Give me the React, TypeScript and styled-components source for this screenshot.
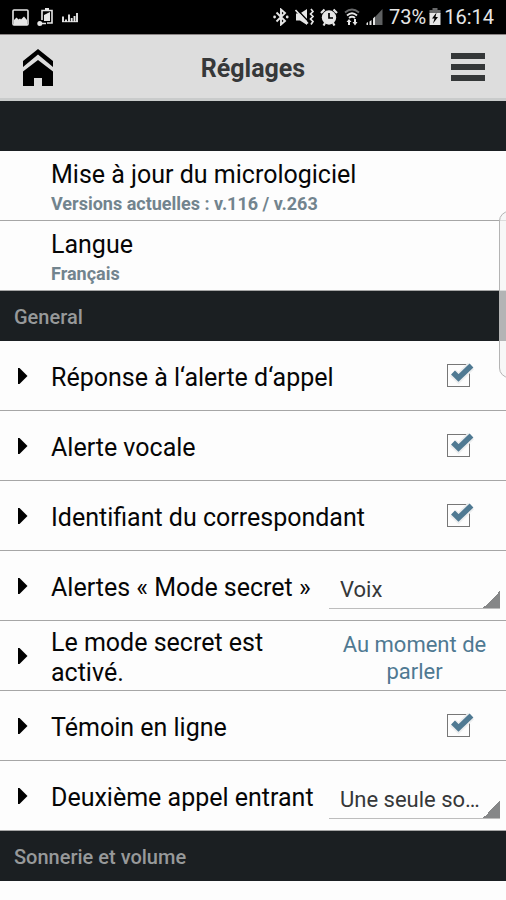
import React, { useState } from "react";
import styled, { createGlobalStyle } from "styled-components";

const GlobalStyle = createGlobalStyle`
  *, *::before, *::after { box-sizing: border-box; }
  body {
    margin: 0;
    background: #fdfdfd;
    color: #060606;
    font-family: Roboto, "Liberation Sans", sans-serif;
  }
  button, select, input { font: inherit; color: inherit; }
`;

const Page = styled.div`
  position: relative;
  overflow: hidden;
  min-height: 100vh;
`;

const StatusBar = styled.div`
  display: flex;
  justify-content: space-between;
  align-items: center;
  height: 34px;
  padding: 0 12px;
  background: #000;
  color: #e6e6e6;
`;

const StatusGroup = styled.div<{ $gap: number }>`
  display: flex;
  align-items: center;
  gap: ${(p) => p.$gap}px;
`;

const StatusText = styled.span`
  font-size: 20px;
  line-height: 34px;
`;

const Header = styled.header`
  display: grid;
  grid-template-columns: 76px 1fr 76px;
  align-items: center;
  height: 67px;
  padding-top: 2px;
  background: #dddddd;
  border-top: 1px solid #8a8484;
  border-bottom: 3px solid #c9cbcb;
`;

const Title = styled.h1`
  margin: 0;
  padding-top: 2px;
  font-size: 25px;
  line-height: 30px;
  font-weight: 700;
  text-align: center;
  color: #363839;
`;

const IconButton = styled.button`
  display: flex;
  justify-content: center;
  align-items: center;
  height: 100%;
  padding: 0;
  border: 0;
  background: none;
  cursor: pointer;
`;

const SectionTitle = styled.h2`
  display: flex;
  align-items: center;
  height: 50px;
  margin: 0;
  padding: 2px 14px 0;
  background: #1b1f22;
  color: #97999a;
  font-size: 20px;
  line-height: 24px;
  font-weight: 500;
`;

const LinkRow = styled.a`
  display: block;
  height: 70px;
  padding: 9px 16px 0 51px;
  border-bottom: 1px solid #a6a6a6;
  color: #060606;
  text-decoration: none;
`;

const LinkTitle = styled.span`
  display: block;
  font-size: 25px;
  line-height: 30px;
`;

const LinkDetail = styled.span`
  display: block;
  font-size: 18px;
  line-height: 28px;
  font-weight: 700;
  color: #72848e;
`;

const Row = styled.div`
  display: flex;
  align-items: center;
  height: 70px;
  padding-right: 6px;
  border-bottom: 1px solid #a6a6a6;
`;

const Disclosure = styled.button`
  display: flex;
  flex: none;
  align-items: center;
  width: 51px;
  height: 100%;
  padding: 0 0 0 18px;
  border: 0;
  background: none;
  cursor: pointer;
`;

const labelText = `
  flex: 1;
  min-width: 0;
  padding-top: 4px;
  font-size: 25px;
  line-height: 30px;
`;

const RowLabel = styled.label`${labelText}`;
const RowText = styled.span`${labelText}`;

const TickBox = styled.span`
  position: relative;
  flex: none;
  width: 23px;
  height: 23px;
  margin-right: 30px;
`;

const TickInput = styled.input`
  appearance: none;
  display: block;
  width: 23px;
  height: 23px;
  margin: 0;
  border: 1px solid #777777;
  background: #fdfdfd;
  cursor: pointer;
  &:not(:checked) + svg { display: none; }
`;

const TickMark = styled.svg`
  position: absolute;
  left: 2px;
  top: -3px;
  pointer-events: none;
`;

const Select = styled.select`
  appearance: none;
  flex: none;
  width: 171px;
  height: 46px;
  padding: 8px 16px 0 11px;
  border: 0;
  border-bottom: 1px solid #bdbdbd;
  border-radius: 0;
  background: linear-gradient(135deg, transparent 50%, #868788 50%) right bottom / 17px 17px no-repeat;
  font-size: 22px;
  color: #363839;
  text-overflow: ellipsis;
  overflow: hidden;
  white-space: nowrap;
`;

const ValueButton = styled.button`
  flex: none;
  width: 171px;
  padding: 4px 8px 0;
  border: 0;
  background: none;
  font-size: 22px;
  line-height: 27px;
  text-align: center;
  color: #4f7992;
  cursor: pointer;
`;

const EdgeHandle = styled.div`
  position: absolute;
  top: 211px;
  right: -16px;
  width: 23px;
  height: 167px;
  border: 1px solid #b4b4b4;
  border-radius: 10px;
  background: rgba(243, 243, 243, 0.7);
`;

const Expander = ({ name }: { name: string }) => (
  <Disclosure type="button" aria-label={name} aria-expanded={false}>
    <svg width="10" height="16" viewBox="0 0 10 16">
      <path d="M0 0H1.5L9.5 8L1.5 16H0Z" fill="#000" />
    </svg>
  </Disclosure>
);

const CheckRow = ({ id, text }: { id: string; text: string }) => {
  const [on, setOn] = useState(true);
  return (
    <Row>
      <Expander name={text} />
      <RowLabel htmlFor={id}>{text}</RowLabel>
      <TickBox>
        <TickInput id={id} type="checkbox" checked={on} onChange={() => setOn(!on)} />
        <TickMark width="28" height="24" viewBox="0 0 28 24">
          <path d="M4 12L9.500 17L22 5" fill="none" stroke="#eceeef" strokeWidth="9" />
          <path d="M4 11.500L9.500 17L22.500 4.500" fill="none" stroke="#4f7992" strokeWidth="5.500" />
        </TickMark>
      </TickBox>
    </Row>
  );
};

const SelectRow = ({ id, text, options }: { id: string; text: string; options: string[] }) => (
  <Row>
    <Expander name={text} />
    <RowLabel htmlFor={id}>{text}</RowLabel>
    <Select id={id}>
      {options.map((o) => (
        <option key={o}>{o}</option>
      ))}
    </Select>
  </Row>
);

const PictureIcon = () => (
  <svg width="17" height="17" viewBox="0 0 17 17">
    <rect x="1" y="1" width="15" height="15" rx="1" fill="none" stroke="#e6e6e6" strokeWidth="1.600" />
    <path d="M2 16V11L4.500 8.500L6.500 10.500L8 9.500L9 10.500L12 7.500L15 11V16Z" fill="#e6e6e6" />
  </svg>
);

const UsbBatteryIcon = () => (
  <svg width="17" height="18" viewBox="0 0 17 18">
    <path d="M5 12V2.500H15V15H10" fill="none" stroke="#e6e6e6" strokeWidth="1.600" />
    <path d="M8 0H12V2H8Z" fill="#e6e6e6" />
    <path d="M7 7L13 4V13H7Z" fill="#e6e6e6" />
    <circle cx="2.800" cy="15.500" r="2.500" fill="#e6e6e6" />
    <path d="M3 15.500H9" stroke="#e6e6e6" strokeWidth="1.500" />
  </svg>
);

const BarsIcon = () => (
  <svg width="17" height="17" viewBox="0 0 17 17">
    <path
      d="M1 4.500V10M4 7.500V10M7 2.500V10M9.700 6V10M12.500 4V10M15 1V10"
      transform="translate(0 3)"
      stroke="#e6e6e6"
      strokeWidth="1.900"
    />
    <path d="M0 12.700H16" stroke="#e6e6e6" strokeWidth="1" />
  </svg>
);

const BluetoothIcon = () => (
  <svg width="16" height="18" viewBox="0 0 16 18">
    <path d="M3.500 4.500L12 13L8 16.500V1.500L12 5L3.500 13.500" fill="none" stroke="#e6e6e6" strokeWidth="1.900" />
    <circle cx="1.600" cy="9" r="1.400" fill="#e6e6e6" />
    <circle cx="14.200" cy="9" r="1.400" fill="#e6e6e6" />
  </svg>
);

const MuteVibrateIcon = () => (
  <svg width="19" height="18" viewBox="0 0 19 18">
    <path d="M1 5.500H5L12 1V17L5 12.500H1Z" fill="#e6e6e6" />
    <path d="M1.500 1L13.500 13.500" stroke="#000" strokeWidth="1.500" />
    <path d="M0.500 2L13 15.500" stroke="#e6e6e6" strokeWidth="1.600" />
    <path d="M16 1L18 3.500L15.500 6L18 8.500L15.500 11L18 13.500L16 16.500" fill="none" stroke="#e6e6e6" strokeWidth="1.700" />
  </svg>
);

const AlarmIcon = () => (
  <svg width="18" height="18" viewBox="0 0 18 18">
    <circle cx="9" cy="9.500" r="7.200" fill="#e6e6e6" />
    <path d="M1 5L4.500 1.500M13.500 1.500L17 5M3.500 17.500L5 15M14.500 17.500L13 15" stroke="#e6e6e6" strokeWidth="2.200" />
    <path d="M9 5V10H13" fill="none" stroke="#000" strokeWidth="1.700" />
  </svg>
);

const WifiIcon = () => (
  <svg width="16" height="18" viewBox="0 0 16 18">
    <path d="M1 4.500Q8 -1.500 15 4.500" fill="none" stroke="#68696a" strokeWidth="1.800" />
    <path d="M3 7.500Q8 3 13 7.500M5 10Q8 7.500 11 10" fill="none" stroke="#e6e6e6" strokeWidth="1.800" />
    <path d="M2.500 14L5 11L7.500 14H6V17H4V14ZM8.500 14H10V11H12V14H13.500L11 17.500Z" fill="#e6e6e6" />
  </svg>
);

const SignalIcon = () => (
  <svg width="17" height="18" viewBox="0 0 17 18">
    <path d="M9 9L16.500 1V17H9Z" fill="#5e6061" />
    <path d="M0.500 17V15L2 14V17ZM3.500 17V13.500L5.500 12V17ZM7 17V10.500L9 8.500V17Z" fill="#e6e6e6" />
  </svg>
);

const BatteryIcon = () => (
  <svg width="12" height="18" viewBox="0 0 12 18">
    <path d="M3.500 0H8.500V2H11.500V6H0.500V2H3.500Z" fill="#68696a" />
    <path d="M0.500 5H11.500V17H0.500Z" fill="#e6e6e6" />
    <path d="M7.500 4.500L3 10.500H5.500L4 15.500L9 9H6.500Z" fill="#000" />
  </svg>
);

export default function App() {
  return (
    <>
      <GlobalStyle />
      <Page>
        <StatusBar>
          <StatusGroup $gap={8}>
            <PictureIcon />
            <UsbBatteryIcon />
            <BarsIcon />
          </StatusGroup>
          <StatusGroup $gap={6}>
            <BluetoothIcon />
            <MuteVibrateIcon />
            <AlarmIcon />
            <WifiIcon />
            <SignalIcon />
            <StatusGroup $gap={3}>
              <StatusText>73%</StatusText>
              <BatteryIcon />
              <StatusText>16:14</StatusText>
            </StatusGroup>
          </StatusGroup>
        </StatusBar>

        <Header>
          <IconButton type="button" aria-label="Accueil">
            <svg width="30" height="37" viewBox="0 0 30 37">
              <path d="M15 0L30 12V18L15 5.500L0 18V12Z" />
              <path d="M15 11L30 22.500V37H19V29H11V37H0V22.500Z" />
            </svg>
          </IconButton>
          <Title>Réglages</Title>
          <IconButton type="button" aria-label="Menu">
            <svg width="34" height="29" viewBox="0 0 34 29">
              <path d="M0 0H34V6H0ZM0 11H34V17H0ZM0 22H34V28H0Z" fill="#343738" />
            </svg>
          </IconButton>
        </Header>

        <main>
          <SectionTitle as="div" />
          <LinkRow href="#micrologiciel">
            <LinkTitle>Mise à jour du micrologiciel</LinkTitle>
            <LinkDetail>Versions actuelles : v.116 / v.263</LinkDetail>
          </LinkRow>
          <LinkRow href="#langue">
            <LinkTitle>Langue</LinkTitle>
            <LinkDetail>Français</LinkDetail>
          </LinkRow>

          <SectionTitle>General</SectionTitle>
          <CheckRow id="reponse" text="Réponse à l‘alerte d‘appel" />
          <CheckRow id="vocale" text="Alerte vocale" />
          <CheckRow id="identifiant" text="Identifiant du correspondant" />
          <SelectRow id="alertes" text="Alertes « Mode secret »" options={["Voix"]} />
          <Row>
            <Expander name="Le mode secret est activé." />
            <RowText id="secret">Le mode secret est activé.</RowText>
            <ValueButton type="button" aria-describedby="secret">
              Au moment de parler
            </ValueButton>
          </Row>
          <CheckRow id="temoin" text="Témoin en ligne" />
          <SelectRow id="deuxieme" text="Deuxième appel entrant" options={["Une seule sonnerie"]} />

          <SectionTitle>Sonnerie et volume</SectionTitle>
        </main>
        <EdgeHandle />
      </Page>
    </>
  );
}
